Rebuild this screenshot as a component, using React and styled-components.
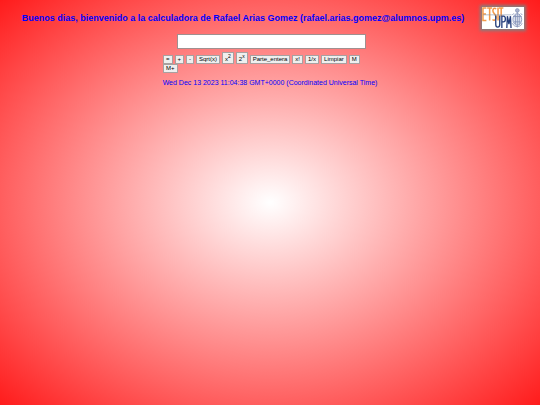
import React, { useState } from "react";
import styled, { createGlobalStyle } from "styled-components";

const keys = [
  { id: "igual", label: "=" },
  { id: "suma", label: "+" },
  { id: "resta", label: "-" },
  { id: "sqrt", label: "Sqrt(x)" },
  { id: "cuadrado", label: "x", sup: "2" },
  { id: "potencia", label: "2", sup: "x" },
  { id: "entera", label: "Parte_entera" },
  { id: "factorial", label: "x!" },
  { id: "inverso", label: "1/x" },
  { id: "limpiar", label: "Limpiar" },
  { id: "m", label: "M" },
  { id: "mmas", label: "M+" },
];

function Logo() {
  return (
    <LogoImage viewBox="0 0 44 23" preserveAspectRatio="none" role="img" aria-label="ETSIT UPM">
      <rect width="44" height="23" fill="#fff" />
      <g fill="none" stroke="#f39a4a" strokeWidth="1.6">
        <path d="M4.6 1H1V14H4.6M1 7.3H4.2" />
        <path d="M5.4 1H10.6M8 1V14" />
        <path d="M14.8 2C13 .4 11.4 1.6 11.4 4C11.4 7 14.8 7.4 14.8 10.8C14.8 14 12.4 14.4 11 13" />
        <path d="M16.8 .6V14M17.8 1H22.4M20.1 1V10" />
      </g>
      <path d="M1 8.2H31" stroke="#8291ab" strokeWidth="0.6" />
      <g fill="none" stroke="#263f7c" strokeWidth="1.4">
        <path d="M14.4 9V18C14.4 22 18.6 22 18.6 18V9" />
        <path d="M20.8 22V9.6H22.4C25.2 9.6 25.2 15.6 22.4 15.6H20.8" />
        <path d="M26 22L26.6 9.6L28.2 18L29.8 9.6L30.4 22" />
      </g>
      <g fill="none" stroke="#8492b8" strokeWidth="0.9">
        <ellipse cx="37" cy="13" rx="4.6" ry="6" fill="#e4e8f1" />
        <circle cx="37" cy="3.6" r="1.9" fill="#aab4cd" />
        <path d="M37 5.2V21.4M32.6 10H41.4M33.6 15.5H40.4M35 8V18M39 8V18" />
        <path d="M32 17C33.4 21.6 40.6 21.6 42 17M31.8 8.4L33.4 6.6M42.2 8.4L40.6 6.6" />
      </g>
    </LogoImage>
  );
}

function App() {
  const [value, setValue] = useState("");

  const handleClick = (id) => {
    if (id === "limpiar") {
      setValue("");
    }
  };

  return (
    <>
      <GlobalStyle />
      <Header>
        <Title>
          Buenos dias, bienvenido a la calculadora de Rafael Arias Gomez (rafael.arias.gomez@alumnos.upm.es)
        </Title>
        <Logo />
      </Header>
      <Calculator>
        <Display
          type="text"
          aria-label="Pantalla"
          value={value}
          onChange={(e) => setValue(e.target.value)}
        />
        <Keys>
          {keys.map((key) => (
            <Key key={key.id} type="button" onClick={() => handleClick(key.id)}>
              {key.label}
              {key.sup && <sup>{key.sup}</sup>}
            </Key>
          ))}
        </Keys>
        <DateText>Wed Dec 13 2023 11:04:38 GMT+0000 (Coordinated Universal Time)</DateText>
      </Calculator>
    </>
  );
}

export default App;

const GlobalStyle = createGlobalStyle`
  html {
    min-height: 100%;
    background: radial-gradient(white, red 112%) no-repeat fixed;
  }
  body {
    margin: 0;
    font-family: "Liberation Sans", Arial, sans-serif;
    color: blue;
  }
`;

const Header = styled.header`
  display: flex;
  align-items: center;
  gap: 6px;
  padding: 7px 16px 0 10px;
`;

const Title = styled.h1`
  flex: 1;
  margin: 0;
  font-size: 9px;
  line-height: 12px;
  text-align: center;
  white-space: nowrap;
`;

const LogoImage = styled.svg`
  flex: none;
  width: 42px;
  height: 22px;
  box-shadow: 0 0 3px 2px gray;
`;

const Calculator = styled.main`
  display: flex;
  flex-direction: column;
  align-items: center;
  padding-top: 5px;
`;

const Display = styled.input`
  box-sizing: border-box;
  width: 35%;
  height: 15px;
  margin-left: 3px;
  padding: 0 2px;
  border: 1px solid #a09090;
  font-size: 8px;
  text-align: right;
`;

const Keys = styled.div`
  display: flex;
  flex-wrap: wrap;
  align-items: flex-end;
  column-gap: 2px;
  width: 40%;
  margin-top: 3px;
  padding: 0 10px 0 1px;
  box-sizing: border-box;
`;

const Key = styled.button`
  padding: 0 2px;
  border: 1px solid #a8a0a0;
  background-color: #efefef;
  color: black;
  font-family: inherit;
  font-size: 6px;
  line-height: 7px;
  cursor: pointer;

  sup {
    font-size: 5px;
    line-height: 7px;
  }
`;

const DateText = styled.p`
  margin: 6px 0 0;
  font-size: 7px;
  line-height: 8px;
`;
